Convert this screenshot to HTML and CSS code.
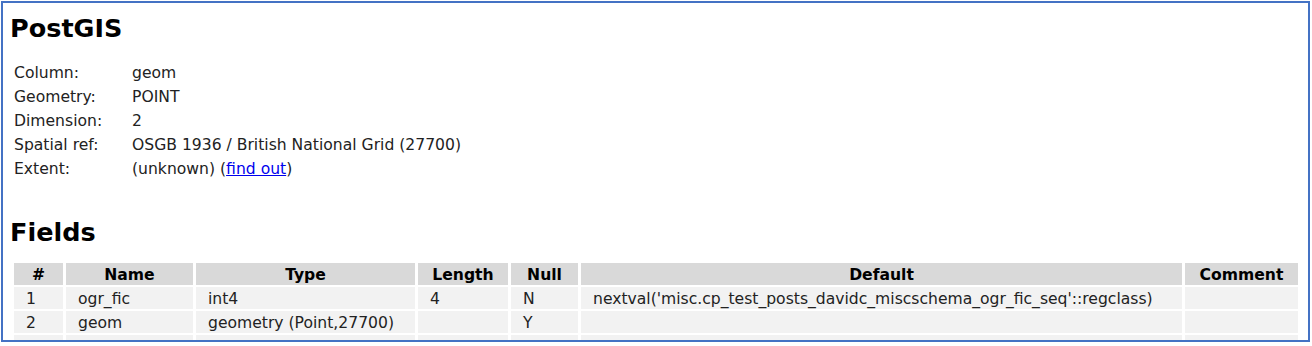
FILE: index.html
```html
<!DOCTYPE html>
<html>
<head>
<meta charset="utf-8">
<link rel="stylesheet" href="styles.css">
</head>
<body>
<div class="frame">
  <h1 class="title">PostGIS</h1>
  <div class="info">
    <div class="label">Column:</div><div class="value">geom</div>
    <div class="label">Geometry:</div><div class="value">POINT</div>
    <div class="label">Dimension:</div><div class="value">2</div>
    <div class="label">Spatial ref:</div><div class="value">OSGB 1936 / British National Grid (27700)</div>
    <div class="label">Extent:</div><div class="value">(unknown) (<a class="link" href="#">find out</a>)</div>
  </div>
  <h1 class="title fields-title">Fields</h1>
  <table class="fields">
    <colgroup>
      <col class="c-num"><col class="c-name"><col class="c-type"><col class="c-len"><col class="c-null"><col class="c-def"><col class="c-com">
    </colgroup>
    <thead>
      <tr><th>#</th><th>Name</th><th>Type</th><th>Length</th><th>Null</th><th>Default</th><th>Comment</th></tr>
    </thead>
    <tbody>
      <tr><td>1</td><td>ogr_fic</td><td>int4</td><td>4</td><td>N</td><td>nextval('misc.cp_test_posts_davidc_miscschema_ogr_fic_seq'::regclass)</td><td></td></tr>
      <tr><td>2</td><td>geom</td><td>geometry (Point,27700)</td><td></td><td>Y</td><td></td><td></td></tr>
      <tr><td></td><td></td><td></td><td></td><td></td><td></td><td></td></tr>
    </tbody>
  </table>
</div>
</body>
</html>
```

FILE: styles.css
```css
html, body {
  margin: 0;
  padding: 0;
  background: #ffffff;
}

body {
  font-family: "DejaVu Sans", Verdana, sans-serif;
  font-size: 15.6px;
  color: #222222;
}

.frame {
  box-sizing: border-box;
  margin: 1px 0 0 1px;
  width: 1309px;
  height: 341px;
  border: 2px solid #4472c4;
  overflow: hidden;
}

.title {
  margin: 10px 0 0 7px;
  font-size: 25.5px;
  line-height: 30px;
  font-weight: bold;
  color: #000000;
}

.fields-title {
  margin-top: 36px;
}

.info {
  display: grid;
  grid-template-columns: 118px auto;
  margin: 18px 0 0 11px;
  line-height: 24px;
}

.link {
  color: #0000ee;
  text-decoration: underline;
}

.fields {
  table-layout: fixed;
  width: 1290px;
  margin: 14px 0 0 8px;
  border-collapse: separate;
  border-spacing: 3px 2px;
}

.c-num { width: 49px; }
.c-name { width: 127px; }
.c-type { width: 219px; }
.c-len { width: 90px; }
.c-null { width: 67px; }
.c-def { width: 601px; }
.c-com { width: 113px; }

.fields th,
.fields td {
  height: 22px;
  box-sizing: border-box;
  padding: 2px 0 0 12px;
  line-height: 20px;
  white-space: nowrap;
  overflow: hidden;
  vertical-align: top;
}

.fields th {
  background: #d9d9d9;
  color: #000000;
  font-weight: bold;
  text-align: center;
  padding-left: 0;
}

.fields td {
  background: #f2f2f2;
  text-align: left;
}
```
